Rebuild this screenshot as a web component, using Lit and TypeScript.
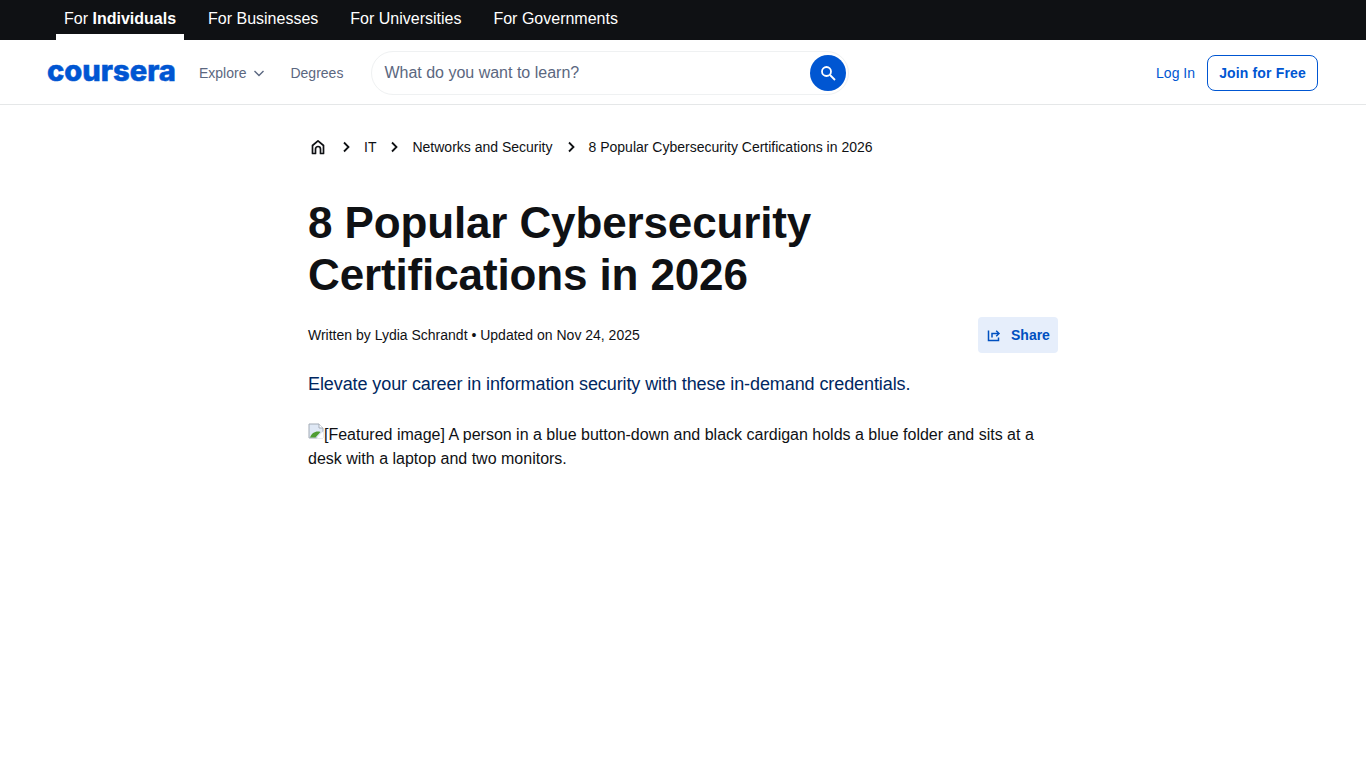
import { LitElement, html, css } from "lit";
import { customElement } from "lit/decorators.js";

@customElement("app-root")
export class AppRoot extends LitElement {
  static styles = css`
    :host { display: block; min-height: 768px; background: #fff; font-family: "Liberation Sans", Arial, sans-serif; color: #0f1114; }
    * { box-sizing: border-box; }
    a { color: inherit; text-decoration: none; }
    .top { height: 40px; background: #0f1114; display: flex; gap: 16px; padding: 0 56px; }
    .tab { height: 40px; padding: 6px 8px 2px; display: flex; align-items: center; gap: 4px; color: #fff; font-size: 16px; border-bottom: 6px solid transparent; }
    .tab.active { border-bottom-color: #fff; }
    .tab b { font-weight: 700; }
    .head { height: 65px; border-bottom: 1px solid #e5e7e8; display: flex; align-items: center; padding: 2px 48px 0; }
    .logo { width: 127px; height: 30px; display: block; margin-right: 24px; flex: none; overflow: visible; }
    .logo text { font-family: "Inter", sans-serif; font-weight: 800; font-size: 28.5px; fill: #0056d2; stroke: #0056d2; stroke-width: 0.5px; }
    .nav { font-size: 14px; color: #5b6780; display: flex; align-items: center; }
    .explore { gap: 7px; margin-right: 25px; }
    .degrees { margin-right: 28px; }
    .search { width: 478px; height: 44px; border: 1px solid #eff1f2; border-radius: 22px; display: flex; align-items: center; justify-content: space-between; padding: 0 2px 0 12px; }
    .search span { font-size: 16px; color: #5b6780; }
    .go { width: 36px; height: 36px; border-radius: 50%; background: #0056d2; display: flex; align-items: center; justify-content: center; }
    .right { margin-left: auto; display: flex; align-items: center; gap: 12px; }
    .login { font-size: 14px; color: #0056d2; }
    .join { width: 111px; height: 36px; border: 1px solid #0056d2; border-radius: 8px; color: #0056d2; font-size: 14px; font-weight: 700; display: flex; align-items: center; justify-content: center; letter-spacing: 0.15px; }
    main { width: 750px; margin-left: 308px; }
    .crumbs { display: flex; align-items: center; height: 84px; font-size: 14px; color: #0f1114; }
    .crumbs svg { flex: none; }
    .sep { margin: 0 11px; }
    h1 { margin: 0; padding-top: 8px; font-size: 44px; line-height: 52px; font-weight: 700; letter-spacing: -0.13px; width: 600px; color: #0f1114; }
    .meta { display: flex; align-items: center; justify-content: space-between; margin-top: 16px; font-size: 14px; }
    .share { width: 80px; height: 36px; background: #e6eefb; border-radius: 4px; display: flex; align-items: center; gap: 10px; padding-left: 9px; color: #0050c0; font-weight: 700; font-size: 14px; }
    .lead { margin: 18px 0 0; font-size: 18px; line-height: 27px; letter-spacing: -0.09px; color: #002761; }
    .alt { margin: 25px 0 0; font-size: 16px; line-height: 24px; }
    .broken { display: inline-block; width: 16px; height: 16px; vertical-align: 1px; }
  `;

  private chev() {
    return html`<svg class="sep" width="14" height="14" viewBox="0 0 14 14" fill="none" stroke="#0f1114" stroke-width="1.8"><path d="M5 2.5 9.5 7 5 11.5"/></svg>`;
  }

  render() {
    return html`
      <div class="top">
        <a class="tab active"><span>For <b>Individuals</b></span></a>
        <a class="tab"><span>For Businesses</span></a>
        <a class="tab"><span>For Universities</span></a>
        <a class="tab"><span>For Governments</span></a>
      </div>
      <header class="head">
        <svg class="logo" viewBox="0 0 127 30"><text x="-1" y="23" textLength="129" lengthAdjust="spacingAndGlyphs">coursera</text></svg>
        <a class="nav explore">Explore
          <svg width="12" height="12" viewBox="0 0 12 12" fill="none" stroke="#5b6780" stroke-width="1.4"><path d="M1.5 4 6 8.5 10.5 4"/></svg>
        </a>
        <a class="nav degrees">Degrees</a>
        <div class="search">
          <span>What do you want to learn?</span>
          <div class="go"><svg width="16" height="16" viewBox="0 0 16 16" fill="none" stroke="#fff" stroke-width="1.8"><circle cx="6.5" cy="6.5" r="4.5"/><path d="m10 10 5 5"/></svg></div>
        </div>
        <div class="right">
          <a class="login">Log In</a>
          <a class="join">Join for Free</a>
        </div>
      </header>
      <main>
        <nav class="crumbs">
          <svg width="20" height="20" viewBox="0 0 20 20" fill="none" stroke="#0f1114" stroke-width="1.7"><path d="M4.5 16.5V8.5L10 3.8 15.5 8.5V16.5H12.5V12A2.5 2.5 0 0 0 7.5 12V16.5Z" stroke-linejoin="round"/></svg>
          ${this.chev()}<a>IT</a>${this.chev()}<a>Networks and Security</a>${this.chev()}<a>8 Popular Cybersecurity Certifications in 2026</a>
        </nav>
        <h1>8 Popular Cybersecurity Certifications in 2026</h1>
        <div class="meta">
          <span>Written by Lydia Schrandt • Updated on Nov 24, 2025</span>
          <a class="share">
            <svg width="14" height="14" viewBox="0 0 14 14" fill="none" stroke="#0050c0" stroke-width="1.5"><path d="M1.5 2.5V12.5H11.5V9.5"/><path d="M5 9.5V5.5H11"/><path d="M9.2 2.8 12 5.5 9.2 8.2"/></svg>
            <span>Share</span>
          </a>
        </div>
        <p class="lead">Elevate your career in information security with these in-demand credentials.</p>
        <p class="alt"><svg class="broken" viewBox="0 0 16 16"><path d="M1 1H11L15 5V15H1Z" fill="#dfe8f5" stroke="#a3abb6"/><path d="M11 1V5H15" fill="#fff" stroke="#a3abb6"/><path d="M2 14.5C3.5 10 8 7.5 12.5 9L7.5 14.5Z" fill="#4f9d32"/><path d="M15.5 8 8.5 15.5H15.5Z" fill="#fff"/></svg>[Featured image] A person in a blue button-down and black cardigan holds a blue folder and sits at a desk with a laptop and two monitors.</p>
      </main>
    `;
  }
}
